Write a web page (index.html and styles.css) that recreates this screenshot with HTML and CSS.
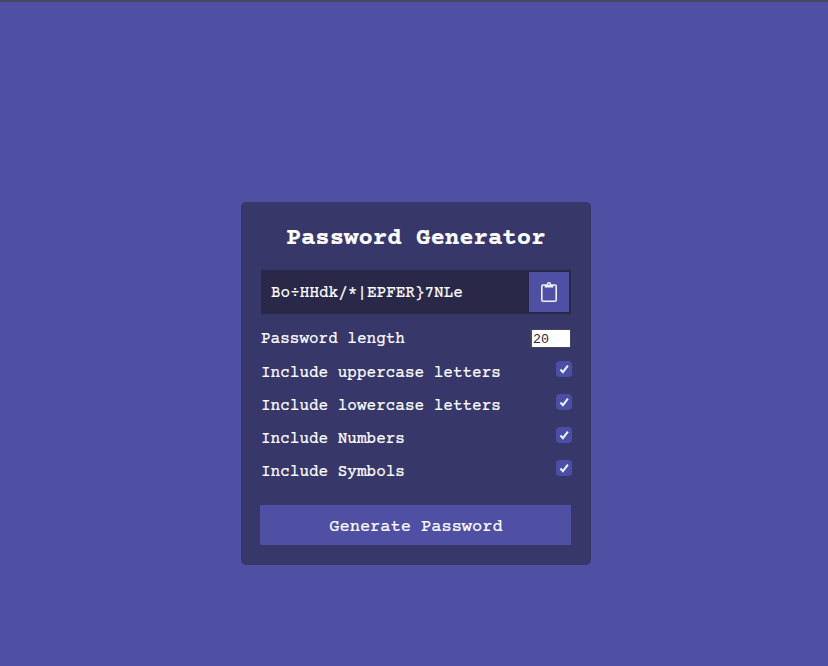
FILE: index.html
```html
<!DOCTYPE html>
<html lang="en">
<head>
<meta charset="utf-8">
<title>Password Generator</title>
<link rel="stylesheet" href="styles.css">
</head>
<body>
<main class="container">
  <h2>Password Generator</h2>
  <div class="result">
    <span class="password">Bo÷HHdk/*|EPFER}7NLe</span>
    <button class="copy" aria-label="Copy password">
      <svg width="18" height="22" viewBox="0 0 18 22" fill="none" stroke="#f1effa" stroke-width="1.6"><rect x="1.8" y="4" width="14.4" height="16.2" rx="1.3"/><path d="M5.5 4.2v1.5h7V4.2" fill="#f1effa"/><circle cx="9" cy="3.2" r="1.5" fill="#4f50a3" stroke-width="1.4"/></svg>
    </button>
  </div>
  <div class="settings">
    <div class="setting length"><label for="length">Password length</label><input id="length" class="number" type="text" value="20"></div>
    <div class="setting"><span>Include uppercase letters</span><span class="check"><svg viewBox="0 0 16 16"><path d="M4.4 8.5l2.5 2.6 5-6.5"/></svg></span></div>
    <div class="setting"><span>Include lowercase letters</span><span class="check"><svg viewBox="0 0 16 16"><path d="M4.4 8.5l2.5 2.6 5-6.5"/></svg></span></div>
    <div class="setting"><span>Include Numbers</span><span class="check"><svg viewBox="0 0 16 16"><path d="M4.4 8.5l2.5 2.6 5-6.5"/></svg></span></div>
    <div class="setting"><span>Include Symbols</span><span class="check"><svg viewBox="0 0 16 16"><path d="M4.4 8.5l2.5 2.6 5-6.5"/></svg></span></div>
  </div>
  <button class="generate">Generate Password</button>
</main>
</body>
</html>
```
FILE: styles.css
```css
* { box-sizing: border-box; }
body {
  margin: 0;
  height: 666px;
  overflow: hidden;
  background: #4f50a3;
  border-top: 2px solid #47465f;
  color: #fff;
  font: 16px/18px "Courier Prime", Courier, "Liberation Mono", monospace;
  -webkit-text-stroke: 0.2px currentColor;
}
.container {
  width: 350px;
  height: 363px;
  margin: 200px 0 0 241px;
  padding: 22px 20px 20px 19px;
  background: #38376a;
  border-radius: 5px;
}
h2 {
  margin: 0 0 16px;
  padding-left: 1px;
  font-size: 24px;
  line-height: 30px;
  text-align: center;
}
.result {
  display: flex;
  align-items: center;
  justify-content: space-between;
  height: 44px;
  margin-left: 1px;
  padding: 0 2px 0 10px;
  background: #2a2848;
}
.password { padding-top: 2px; }
button {
  border: 0;
  background: #4f50a3;
  color: #fff;
  font-family: inherit;
}
.copy {
  display: flex;
  align-items: center;
  justify-content: center;
  width: 40px;
  height: 40px;
  padding: 0 1px 0 0;
}
.settings { padding: 16px 0 0 1px; }
.setting {
  display: flex;
  justify-content: space-between;
  height: 33px;
  padding-top: 1px;
}
.length { padding-top: 0; }
.number {
  width: 41px;
  height: 19px;
  margin-top: -1px;
  padding: 1px 1px 0;
  border: 1px solid #45445d;
  border-width: 1px 1px 1px 2px;
  background: #fff;
  color: #28273f;
  font: 13.3px "Liberation Mono", monospace;
  -webkit-text-stroke: 0;
}
.check {
  width: 16px;
  height: 16px;
  margin: -3px -1px 0 0;
  border-radius: 4px;
  background: #4c4da5;
}
.check svg {
  display: block;
  fill: none;
  stroke: #e5f8ff;
  stroke-width: 2;
}
.generate {
  display: block;
  width: 311px;
  height: 40px;
  margin-top: 10px;
  padding: 5px 0 0 1px;
  border-radius: 2px 0 0 2px;
  font-size: 17px;
  -webkit-text-stroke: 0.2px currentColor;
}
```
